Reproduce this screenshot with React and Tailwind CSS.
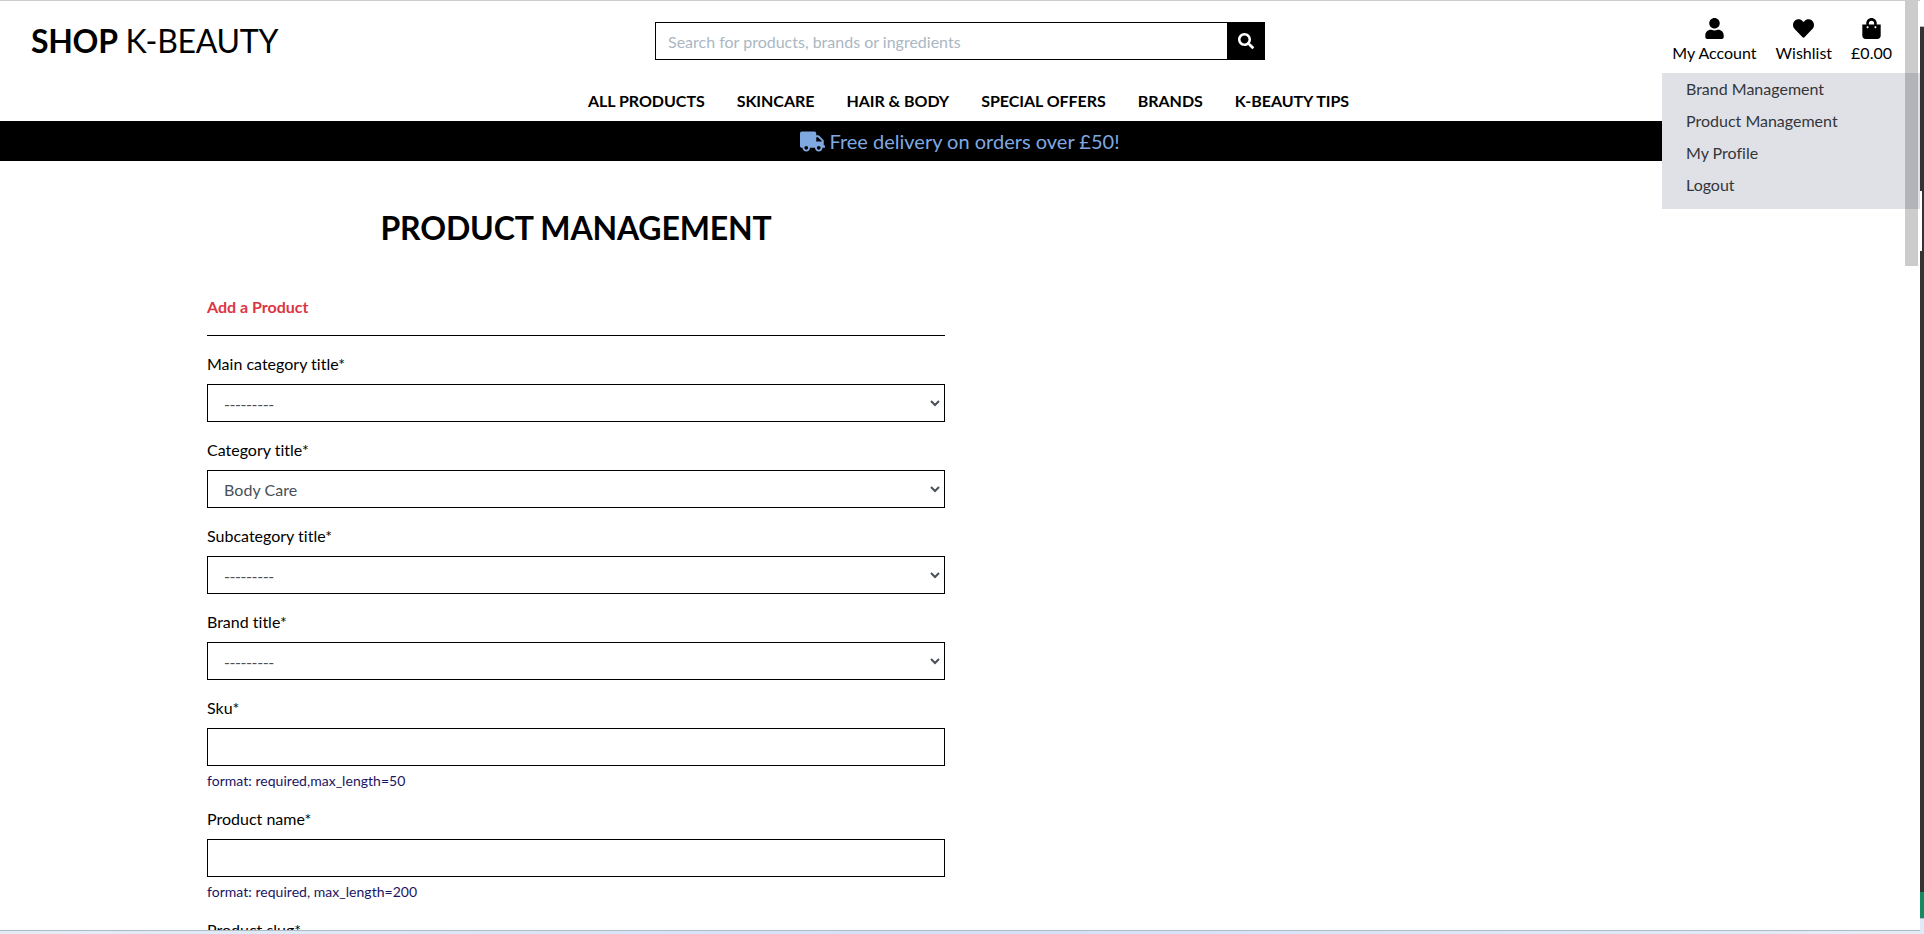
import { FaUser, FaHeart, FaShoppingBag, FaSearch, FaTruck } from 'react-icons/fa';

const nav = ['ALL PRODUCTS', 'SKINCARE', 'HAIR & BODY', 'SPECIAL OFFERS', 'BRANDS', 'K-BEAUTY TIPS'];
const accountLinks = ['Brand Management', 'Product Management', 'My Profile', 'Logout'];

function Account({ icon, label }) {
  return (
    <a className="flex flex-col items-center">
      <span className="flex h-[25px] items-center">{icon}</span>
      <span className="leading-6">{label}</span>
    </a>
  );
}

function SelectField({ label, value }) {
  const empty = value.startsWith('-');
  return (
    <div className="mb-4">
      <label className="mb-2 block leading-6">{label}*</label>
      <div className="flex h-[38px] items-center justify-between border border-black pr-1 pl-4 text-[#495057]">
        <span className={empty ? 'pt-0.5 tracking-[-0.42px]' : 'pt-0.5 tracking-[0.05px]'}>{value}</span>
        <svg width="10" height="8" viewBox="0 0 10 8" fill="none" stroke="#495057" strokeWidth="2">
          <path d="M1 2l4 4 4-4" />
        </svg>
      </div>
    </div>
  );
}

function TextField({ label, help }) {
  return (
    <div className="mb-4">
      <label className="mb-2 block leading-6">{label}*</label>
      <input className="block h-[38px] w-full border border-black px-3" />
      {help && <small className="mt-1 block text-[14px] leading-[21px] tracking-[0.03px] text-[#1b1464]">{help}</small>}
    </div>
  );
}

export default function App() {
  return (
    <div className="flex h-[934px] w-[1924px] overflow-hidden bg-white font-['Lato',sans-serif] text-base text-black [font-variant-ligatures:none]">
      <div className="relative flex w-[1920px] flex-col">
        <div className="h-[930px] overflow-hidden border-t border-[#ccc]">
          <header className="h-[120px]">
            <div className="grid h-[76px] grid-cols-[655px_610px_1fr]">
              <h1 className="pt-[16px] pl-[31px] text-[32px] leading-[48px] tracking-[-0.3px]">
                <strong className="font-bold">SHOP</strong> K-BEAUTY
              </h1>
              <div className="mt-[21px] flex h-[38px]">
                <input
                  className="h-full flex-1 border border-black px-3 placeholder:text-[#aab7c4]"
                  placeholder="Search for products, brands or ingredients"
                />
                <button className="flex w-[37px] items-center justify-center bg-black pr-px text-white">
                  <FaSearch size={16} />
                </button>
              </div>
              <div className="flex justify-end gap-[19px] pt-[15px] pr-[28px]">
                <Account icon={<FaUser size={21} />} label="My Account" />
                <Account icon={<FaHeart size={21} />} label="Wishlist" />
                <Account icon={<FaShoppingBag size={21} />} label="£0.00" />
              </div>
            </div>
            <nav className="flex gap-8 pt-[12px] pl-[588px] leading-6 font-bold tracking-[-0.035px]">
              {nav.map((n) => (
                <a key={n}>{n}</a>
              ))}
            </nav>
          </header>
          <div className="flex h-10 items-center justify-center bg-black text-[20px] text-[#7fa8e0]">
            <FaTruck size={25} className="mr-1" />
            <span>Free delivery on orders over £50!</span>
          </div>
          <main className="ml-[207px] w-[738px]">
            <h2 className="pt-[43px] text-center text-[32px] leading-[48px] font-bold tracking-[-0.16px]">
              PRODUCT MANAGEMENT
            </h2>
            <p className="mt-[43px] leading-6 font-bold text-[#dc3545]">Add a Product</p>
            <hr className="mt-4 mb-4 border-black" />
            <SelectField label="Main category title" value="---------" />
            <SelectField label="Category title" value="Body Care" />
            <SelectField label="Subcategory title" value="---------" />
            <SelectField label="Brand title" value="---------" />
            <TextField label="Sku" help="format: required,max_length=50" />
            <TextField label="Product name" help="format: required, max_length=200" />
            <TextField label="Product slug" />
          </main>
        </div>
        <div className="h-1 border-t border-[#b4bac4] bg-gradient-to-r from-[#e2edf7] via-[#d3dff7] to-[#e2edf7]" />

        <ul className="absolute top-[73px] right-0 h-[136px] w-[258px] bg-[#e0e1e6] pl-6 text-[#33363b]">
          {accountLinks.map((l) => (
            <li key={l} className="h-8 leading-8">{l}</li>
          ))}
        </ul>
        <div className="absolute top-px right-[2px] h-[265px] w-[13px] bg-black/20" />
      </div>
      <div className="flex w-1 flex-col">
        <div className="h-[27px] border-b border-[#bbb] bg-white" />
        <div className="h-[164px] bg-[#333333]" />
        <div className="h-[60px] border-l-2 border-white bg-[#333333]" />
        <div className="h-[641px] bg-[#353431]" />
        <div className="h-[26px] bg-[#188a62]" />
        <div className="flex-1 border-t border-[#b4bac4] bg-[#e0ebf9]" />
      </div>
    </div>
  );
}
